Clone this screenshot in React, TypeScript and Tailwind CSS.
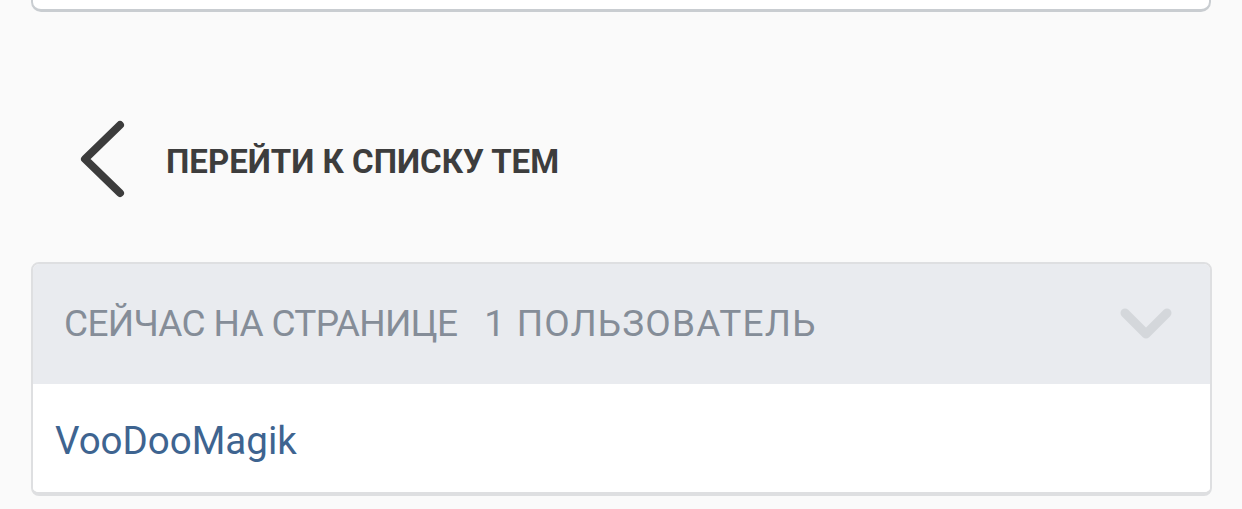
export default function App() {
  return (
    <div
      className="min-h-[509px] w-[1242px] overflow-hidden bg-[#fafafa]"
      style={{ fontFamily: "Roboto, 'Liberation Sans', sans-serif" }}
    >
      {/* previous card, only its bottom edge is visible */}
      <div className="mx-[31px] -mt-[40px] h-[52px] rounded-b-[10px] border-x-[2px] border-b-[3px] border-[#c9cdd1] bg-white" />

      {/* back link */}
      <div className="flex h-[74px] items-center pl-[78px] mt-[110px]">
        <svg width="48" height="78" viewBox="0 0 48 78" className="shrink-0">
          <path
            d="M42 5 L7 39 L42 73"
            fill="none"
            stroke="#3c3c3c"
            strokeWidth="8"
            strokeLinecap="round"
            strokeLinejoin="round"
          />
        </svg>
        <span className="ml-[40px] mt-[6px] text-[33px] font-bold text-[#3d3d3d]">
          ПЕРЕЙТИ К СПИСКУ ТЕМ
        </span>
      </div>

      {/* online users card */}
      <div className="mx-[31px] mt-[66px] w-[1181px] overflow-hidden rounded-[8px] border-x-[2px] border-t-[2px] border-b-[4px] border-[#dedfe1]">
        <div className="flex h-[120px] items-center bg-[#e9ebef] pl-[31px] pr-[38px]">
          <span className="text-[37px] tracking-[-0.7px] text-[#858d98]">СЕЙЧАС НА СТРАНИЦЕ</span>
          <span className="ml-[27px] text-[37px] tracking-[1.2px] text-[#858d98]">1 ПОЛЬЗОВАТЕЛЬ</span>
          <svg width="52" height="36" viewBox="0 0 52 36" className="ml-auto">
            <path
              d="M5 7 L26 28 L47 7"
              fill="none"
              stroke="#d4d7db"
              strokeWidth="9"
              strokeLinecap="round"
              strokeLinejoin="round"
            />
          </svg>
        </div>
        <div className="flex h-[108px] items-center bg-white pl-[22px] pt-[6px]">
          <span className="text-[38.5px] text-[#3e6490]">VooDooMagik</span>
        </div>
      </div>
    </div>
  );
}
